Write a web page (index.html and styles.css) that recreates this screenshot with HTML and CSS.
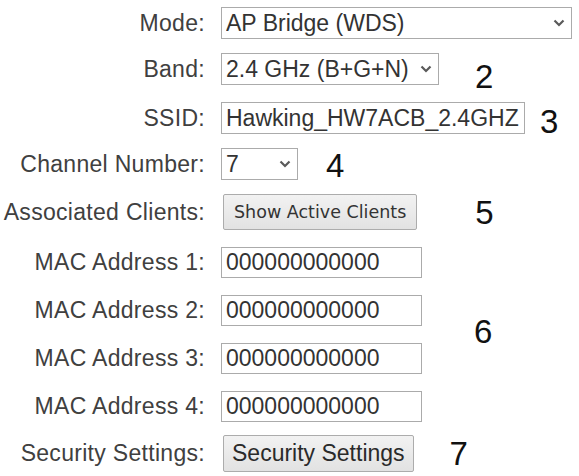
FILE: index.html
```html
<!DOCTYPE html>
<html lang="en">
<head>
    <meta charset="UTF-8">
    <meta name="viewport" content="width=device-width, initial-scale=1.0">
    <title>Wireless Settings</title>
    <link rel="stylesheet" href="styles.css">
</head>
<body>
    <div class="form">
        <div class="row">
            <label class="label">Mode:</label>
            <div class="select select-mode">
                <select><option>AP Bridge (WDS)</option></select>
                <svg class="chev" viewBox="0 0 12 8"><path d="M1.5 1.5 L6 6 L10.5 1.5"/></svg>
            </div>
        </div>

        <div class="row">
            <label class="label">Band:</label>
            <div class="select select-band">
                <select><option>2.4 GHz (B+G+N)</option></select>
                <svg class="chev" viewBox="0 0 12 8"><path d="M1.5 1.5 L6 6 L10.5 1.5"/></svg>
            </div>
            <span class="note note-2">2</span>
        </div>

        <div class="row row-ssid">
            <label class="label">SSID:</label>
            <input class="field field-ssid" type="text" value="Hawking_HW7ACB_2.4GHZ">
            <span class="note note-3">3</span>
        </div>

        <div class="row">
            <label class="label">Channel Number:</label>
            <div class="select select-channel">
                <select><option>7</option></select>
                <svg class="chev" viewBox="0 0 12 8"><path d="M1.5 1.5 L6 6 L10.5 1.5"/></svg>
            </div>
            <span class="note note-4">4</span>
        </div>

        <div class="row row-btn">
            <label class="label">Associated Clients:</label>
            <button class="btn btn-small">Show Active Clients</button>
            <span class="note note-5">5</span>
        </div>

        <div class="mac-group">
            <div class="mac-rows">
                <div class="row row-mac">
                    <label class="label">MAC Address 1:</label>
                    <input class="field field-mac" type="text" value="000000000000">
                </div>
                <div class="row row-mac">
                    <label class="label">MAC Address 2:</label>
                    <input class="field field-mac" type="text" value="000000000000">
                </div>
                <div class="row row-mac">
                    <label class="label">MAC Address 3:</label>
                    <input class="field field-mac" type="text" value="000000000000">
                </div>
                <div class="row row-mac">
                    <label class="label">MAC Address 4:</label>
                    <input class="field field-mac" type="text" value="000000000000">
                </div>
            </div>
            <span class="note note-6">6</span>
        </div>

        <div class="row row-security">
            <label class="label">Security Settings:</label>
            <button class="btn">Security Settings</button>
            <span class="note note-7">7</span>
        </div>
    </div>
</body>
</html>
```

FILE: styles.css
```css
* {
    margin: 0;
    padding: 0;
    box-sizing: border-box;
}

body {
    font-family: 'Liberation Sans', Arial, sans-serif;
    font-size: 23px;
    color: #3b3b3b;
    background: #fff;
}

.form {
    display: flex;
    flex-direction: column;
    gap: 14px;
    padding-top: 7px;
}

.row {
    display: flex;
    align-items: center;
    height: 32px;
}

.label {
    flex: none;
    width: 205px;
    margin-right: 16px;
    text-align: right;
    white-space: nowrap;
    letter-spacing: 0.3px;
    color: #404040;
}

.select {
    position: relative;
    height: 100%;
}

.select select {
    appearance: none;
    -webkit-appearance: none;
    width: 100%;
    height: 100%;
    border: 1px solid #ababab;
    background: #fff;
    color: #333;
    font: inherit;
    padding: 0 4px;
}

.chev {
    position: absolute;
    right: 7px;
    top: 12px;
    width: 12px;
    height: 8px;
    fill: none;
    stroke: #5a5a5a;
    stroke-width: 2.2;
    pointer-events: none;
}

.select-mode { width: 351px; }
.select-band { width: 218px; }
.select-channel { width: 77px; }

.field {
    height: 100%;
    border: 1px solid #ababab;
    background: #fff;
    color: #333;
    font: inherit;
    padding: 0 4px;
}

.field-ssid { width: 304px; }
.field-mac { width: 201px; }

.btn {
    height: 100%;
    margin-left: 2px;
    padding: 0 8px;
    border: 1px solid #acacac;
    border-radius: 2px;
    background: linear-gradient(#f2f2f2, #e2e2e2);
    color: #2a2a2a;
    font: inherit;
}

.btn-small {
    padding: 0 10px;
    font-family: 'DejaVu Sans', Verdana, sans-serif;
    font-size: 17.5px;
    color: #333;
}

.row-ssid {
    margin-top: 3px;
}

.row-btn {
    height: 36px;
}

.mac-group {
    display: flex;
    align-items: center;
    margin-top: 3px;
}

.mac-rows {
    display: flex;
    flex-direction: column;
    gap: 17px;
}

.row-mac {
    height: 31px;
}

.row-security {
    height: 37px;
    margin-top: -1px;
}

.note {
    font-size: 33px;
    line-height: 1;
    color: #111;
}

.note-2 { margin-left: 36px; margin-top: 14px; }
.note-3 { margin-left: 15px; margin-top: 6px; }
.note-4 { margin-left: 28px; margin-top: 2px; }
.note-5 { margin-left: 58px; }
.note-6 { margin-left: 52px; margin-top: -6px; }
.note-7 { margin-left: 36px; }
```
